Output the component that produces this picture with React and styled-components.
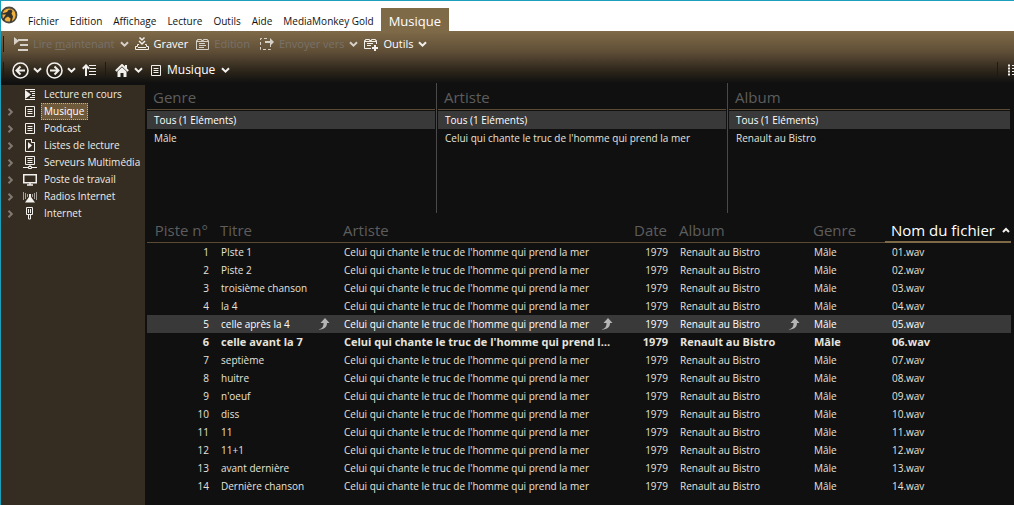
import React from 'react';
import styled, { createGlobalStyle, css } from 'styled-components';

const GlobalStyle = createGlobalStyle`
  * { box-sizing: border-box; }
  html, body { margin: 0; }
  body {
    background: #101010;
    color: #e6e3dc;
    font-family: "Open Sans", "Noto Sans", sans-serif;
    font-size: 10px;
    line-height: 18px;
  }
  button { font: inherit; color: inherit; background: none; border: 0; margin: 0; padding: 0; }
`;

const Window = styled.div`
  display: flex;
  flex-direction: column;
  min-height: 100vh;
  border-top: 1px solid #1b9fbd;
  border-left: 1px solid #1b9fbd;
  overflow: hidden;
`;

const MenuBar = styled.header`
  display: flex;
  align-items: stretch;
  height: 30px;
  background: #fff;
  color: #111;
`;

const Menus = styled.nav`
  display: flex;
  gap: 11px;
  padding: 9px 7px 0 10px;
`;

const MenuButton = styled.button`
  white-space: nowrap;
`;

const Tab = styled.button`
  align-self: flex-end;
  height: 23px;
  padding: 3px 8px 0;
  background: #7f6a48;
  color: #fff;
  font-size: 13px;
  line-height: 20px;
`;

const Toolbars = styled.div`
  background: linear-gradient(#7f6a48, #5f4e37 40%, #2b241a 78%, #101010);
`;

const Toolbar = styled.div`
  display: flex;
  align-items: center;
  height: 26px;
  padding-left: 2px;
`;

const Separator = styled.span`
  flex: none;
  width: 1px;
  height: 16px;
  margin-left: ${(p) => p.$space || 0}px;
  background: #1d1913;
`;

const ToolButton = styled.button`
  display: flex;
  align-items: center;
  gap: ${(p) => p.$gap || 5}px;
  margin-left: ${(p) => p.$space || 6}px;
  color: #fff;
  font-size: ${(p) => (p.$large ? 12 : 11)}px;
  white-space: nowrap;

  ${(p) => p.disabled && css`
    color: #77716a;
    svg { opacity: 0.8; }
  `}
`;

const Spacer = styled.span`
  flex: 1;
`;

const Glyph = styled.svg`
  display: block;
  flex: none;
  fill: none;
  stroke: #f2f0ec;
  stroke-width: ${(p) => p.$weight || 1};
`;

const Body = styled.div`
  display: flex;
  flex: 1;
  padding-right: 3px;
`;

const Sidebar = styled.aside`
  flex: none;
  width: 144px;
  margin: 2px 2px 0 0;
  padding-top: 1px;
  background: #352c22;
`;

const Tree = styled.ul`
  list-style: none;
  margin: 0;
  padding: 0;
`;

const TreeItem = styled.li`
  display: grid;
  grid-template-columns: 12px 14px 1fr;
  column-gap: 4px;
  align-items: center;
  height: 17px;
  padding-left: 6px;
`;

const TreeLink = styled.a`
  grid-column: 3;
  justify-self: start;
  padding: 0 3px 0 2px;
  border: 1px solid transparent;
  line-height: 15px;
  color: #efece4;
  text-decoration: none;
  white-space: nowrap;

  ${(p) => p.$current && css`
    background: #6f593b;
    border: 1px dotted #b7b3aa;
    color: #fff;
  `}
`;

const IconCell = styled.span`
  grid-column: 2;
  display: flex;
  justify-content: center;
`;

const Main = styled.main`
  flex: 1;
  min-width: 0;
`;

const Filters = styled.div`
  display: grid;
  grid-template-columns: 289fr 291fr 284fr;
  height: 130px;
`;

const FilterColumn = styled.section`
  min-width: 0;
  padding-right: 1px;
  & + & {
    border-left: 1px solid #4a4a4a;
    padding-left: 1px;
  }
`;

const FilterTitle = styled.h2`
  margin: 0 0 1px;
  height: 27px;
  padding-left: 6px;
  border-bottom: 1px solid #5b4a34;
  color: #5d5d5d;
  font-size: 15px;
  font-weight: 400;
  line-height: 28px;
`;

const FilterOption = styled.button`
  display: block;
  width: 100%;
  height: 18px;
  padding: 0 7px;
  text-align: left;
  line-height: 18px;
  white-space: nowrap;
  background: ${(p) => (p.$selected ? '#393939' : 'transparent')};
  color: ${(p) => (p.$selected ? '#fff' : 'inherit')};
`;

const TrackTable = styled.table`
  width: 100%;
  margin-top: 5px;
  table-layout: fixed;
  border-collapse: separate;
  border-spacing: 0;
`;

const Col = styled.col`
  width: ${(p) => p.$width};
`;

const HeadCell = styled.th`
  height: 25px;
  padding: 0 6px;
  border-bottom: ${(p) => (p.$sorted ? '2px solid #7f6a48' : '1px solid #5b4a34')};
  color: ${(p) => (p.$sorted ? '#fff' : '#5d5d5d')};
  font-size: 15px;
  font-weight: 400;
  line-height: 22px;
  text-align: ${(p) => (p.$right ? 'right' : 'left')};
  white-space: nowrap;
`;

const SortButton = styled.button`
  display: inline-flex;
  align-items: center;
  gap: 7px;
`;

const Row = styled.tr`
  ${(p) => p.$selected && css`
    background: #393939;
    color: #fff;
  `}
  ${(p) => p.$playing && css`
    font-size: 11px;
    font-weight: 700;
  `}
`;

const Cell = styled.td`
  height: 18px;
  padding: 0 7px;
  padding-right: ${(p) => (p.$right ? 5 : 7)}px;
  overflow: hidden;
  line-height: 18px;
  text-align: ${(p) => (p.$right ? 'right' : 'left')};
  text-overflow: ellipsis;
  white-space: nowrap;
`;

const Linked = styled.span`
  display: flex;
  align-items: center;
  justify-content: space-between;
`;

const Chevron = () => (
  <Glyph width="9" height="7" viewBox="0 0 9 7" $weight={2}><path d="M1 1.2 4.5 4.7 8 1.2" /></Glyph>
);
const Expander = () => (
  <Glyph width="7" height="8" viewBox="0 0 7 8" $weight={2} opacity="0.4"><path d="M1.500 .8 4.800 4 1.500 7.200" /></Glyph>
);
const PlayNowIcon = () => (
  <Glyph width="14" height="14" viewBox="0 0 14 14">
    <path d="M0 0 5 4 0 8Z" fill="#f2f0ec" stroke="none" />
    <path d="M4 3h10M6 8h8M4 13h10" strokeWidth="2" />
  </Glyph>
);
const BurnIcon = () => (
  <Glyph width="14" height="14" viewBox="0 0 14 14">
    <path d="M4.500 .5 7 3l2.500-2.500M4 4l3 3 3-3" strokeWidth="1.500" />
    <path d="M4 7.500H2.500v2H.5v3h13v-3h-2v-2H10M3 10.500h8" />
  </Glyph>
);
const EditIcon = () => (
  <Glyph width="13" height="13" viewBox="0 0 13 13">
    <path d="M.5 11.500v-9h1v-1h4v1h2v-1h4v1h1v9ZM1 3.500h11M3 5.500h6M3 7.500h7M3 9.500h5" />
  </Glyph>
);
const SendIcon = () => (
  <Glyph width="14" height="12" viewBox="0 0 14 12">
    <path d="M7 .5H.5v11h10V7" strokeDasharray="3 2" />
    <path d="M5 3h5V0l4 4-4 4V5H5Z" fill="#f2f0ec" stroke="none" />
  </Glyph>
);
const ToolsIcon = () => (
  <Glyph width="14" height="13" viewBox="0 0 14 13">
    <path d="M7 10.500H.5v-8h1v-1h4v1h2v-1h4v1h1V6M1 3.500h11M3 5.500h6M3 7.500h4" />
    <path d="M11 7v6M8 10h6" strokeWidth="2" />
  </Glyph>
);
const ArrowCircle = ({ forward }) => (
  <Glyph width="17" height="17" viewBox="0 0 17 17">
    <circle cx="8.500" cy="8.500" r="7.500" strokeWidth="1.600" />
    <path d={forward ? 'M4 8.500h8M8.500 4.500l4 4-4 4' : 'M13 8.500H5M8.500 4.500l-4 4 4 4'} strokeWidth="2" />
  </Glyph>
);
const UpIcon = () => (
  <Glyph width="15" height="12" viewBox="0 0 15 12">
    <path d="M4 12V2M.8 4.800 4 1.400 7.200 4.800" strokeWidth="2" />
    <path d="M7 1.500h7M8 4.500h6M7 7.500h7M7 10.500h7" />
  </Glyph>
);
const HomeIcon = () => (
  <Glyph width="14" height="13" viewBox="0 0 14 13">
    <path d="M.8 7 7 1l6.200 6" strokeWidth="2" />
    <path d="M10 1h2v4h-2ZM2.500 7.500 7 3.200l4.500 4.300V13H8.500V9h-3v4h-3Z" fill="#f2f0ec" stroke="none" />
  </Glyph>
);
const LibraryIcon = () => (
  <Glyph width="10" height="11" viewBox="0 0 10 11">
    <path d="M.5.5h9v10h-9ZM2.500 3.500h5M2.500 5.500h5M2.500 7.500h5" />
  </Glyph>
);
const ListIcon = () => (
  <Glyph width="6" height="12" viewBox="0 0 6 12" $weight={2}>
    <path d="M0 1.500h2M0 4.500h2M0 7.500h2M0 10.500h2" />
    <path d="M4 1.500h2M4 4.500h2M4 7.500h2M4 10.500h2" strokeWidth="1" />
  </Glyph>
);
const NowPlayingIcon = () => (
  <Glyph width="10" height="11" viewBox="0 0 10 11">
    <path d="M0 1v9l6-4.500Z" fill="#f2f0ec" stroke="none" />
    <path d="M0 .5h10M5 2.500h5M7 4.500h3M7 6.500h3M5 8.500h5M0 10.500h10" />
  </Glyph>
);
const PlaylistIcon = () => (
  <Glyph width="10" height="13" viewBox="0 0 10 13">
    <path d="M6.500.5h-6v12h9V4M6.500 0v3.500H10" />
    <path d="M3 3v7l4-3.500Z" fill="#f2f0ec" stroke="none" />
  </Glyph>
);
const ServerIcon = () => (
  <Glyph width="14" height="13" viewBox="0 0 14 13">
    <path d="M2.500.5h9v8h-9ZM4.500 2.500h5M4.500 4.500h5M4.500 6.500h5M0 11.500h5M9 11.500h5M7 9v1M5.500 10.500h3v2h-3Z" />
  </Glyph>
);
const ComputerIcon = () => (
  <Glyph width="14" height="12" viewBox="0 0 14 12">
    <path d="M.75.75h12.500v8H.75Z" strokeWidth="1.500" /><path d="M7 9v2M4 11h6" strokeWidth="1.500" />
  </Glyph>
);
const RadioIcon = () => (
  <Glyph width="14" height="12" viewBox="0 0 14 12">
    <path d="M.5 1v8M2.500 2v6M4.500 3v3M9.500 3v3M11.500 2v6M13.500 1v8" opacity="0.6" />
    <path d="M6 3h2v3l4 5.500H2L6 6Z" fill="#f2f0ec" stroke="none" />
  </Glyph>
);
const InternetIcon = () => (
  <Glyph width="8" height="13" viewBox="0 0 8 13">
    <path d="M.5.5h6v7h-6ZM2.500 2v4M4.500 2v4M2.500 8v4h2v-4" />
  </Glyph>
);
const LinkArrow = () => (
  <Glyph width="12" height="12" viewBox="0 0 12 12" aria-hidden="true">
    <path d="M7 0 11.500 5H9c0 4-2.500 6.500-8.500 6.500C4 10.500 5.500 9 5.500 5H2.500Z" fill="#b5b5b5" stroke="none" />
  </Glyph>
);
const SortArrow = () => (
  <Glyph width="8" height="6" viewBox="0 0 8 6" $weight={2}><path d="M1 5 4 2l3 3" /></Glyph>
);

const LogoArt = styled.svg`
  flex: none;
  margin: 5px 0 0 -1px;
`;
const Logo = () => (
  <LogoArt width="18" height="18" viewBox="0 0 18 18" role="img" aria-label="MediaMonkey">
    <circle cx="9" cy="9" r="7.500" fill="#f3b13c" stroke="#4b4944" strokeWidth="1.800" />
    <path d="M2 7.500 7 6l1.500-2 2.500-.5 1.500 1.500-1 2.500 1.500 3-1.500 5.500-1.500.5.500-4L8 10.500 5.500 12 4 15l-1.500-1.500 2-3L6 8.500H2Z" fill="#35332d" />
  </LogoArt>
);

const menus = ['Fichier', 'Edition', 'Affichage', 'Lecture', 'Outils', 'Aide', 'MediaMonkey Gold'];

const nodes = [
  { label: 'Lecture en cours', Icon: NowPlayingIcon, leaf: true },
  { label: 'Musique', Icon: LibraryIcon, current: true },
  { label: 'Podcast', Icon: LibraryIcon },
  { label: 'Listes de lecture', Icon: PlaylistIcon },
  { label: 'Serveurs Multimédia', Icon: ServerIcon },
  { label: 'Poste de travail', Icon: ComputerIcon },
  { label: 'Radios Internet', Icon: RadioIcon },
  { label: 'Internet', Icon: InternetIcon },
];

const ARTIST = "Celui qui chante le truc de l'homme qui prend la mer";
const ALBUM = 'Renault au Bistro';

const filters = [
  ['Genre', 'Mâle'],
  ['Artiste', ARTIST],
  ['Album', ALBUM],
];

const titles = [
  'PIste 1', 'Piste 2', 'troisième chanson', 'la 4', 'celle après la 4', 'celle avant la 7', 'septième',
  'huitre', "n'oeuf", 'diss', '11', '11+1', 'avant dernière', 'Dernière chanson',
];

function TrackRow({ number, title }) {
  const selected = number === 5;
  const withArrow = (text) => (selected ? <Linked>{text}<LinkArrow /></Linked> : text);
  return (
    <Row $selected={selected} $playing={number === 6}>
      <Cell $right>{number}</Cell>
      <Cell>{withArrow(title)}</Cell>
      <Cell>{withArrow(ARTIST)}</Cell>
      <Cell $right>1979</Cell>
      <Cell>{withArrow(ALBUM)}</Cell>
      <Cell>Mâle</Cell>
      <Cell>{String(number).padStart(2, '0')}.wav</Cell>
    </Row>
  );
}

export default function App() {
  return (
    <>
      <GlobalStyle />
      <Window>
        <MenuBar>
          <Logo />
          <Menus>{menus.map((m) => <MenuButton key={m}>{m}</MenuButton>)}</Menus>
          <Tab>Musique</Tab>
        </MenuBar>
        <Toolbars>
          <Toolbar>
            <Separator />
            <ToolButton disabled $space={10}><PlayNowIcon /><span>Lire <u>m</u>aintenant</span><Chevron /></ToolButton>
            <ToolButton><BurnIcon />Graver</ToolButton>
            <ToolButton disabled $space={8}><EditIcon />Edition</ToolButton>
            <ToolButton disabled $space={10}><SendIcon />Envoyer vers<Chevron /></ToolButton>
            <ToolButton><ToolsIcon />Outils<Chevron /></ToolButton>
          </Toolbar>
          <Toolbar>
            <Separator />
            <ToolButton $space={8} $gap={4} aria-label="Précédent"><ArrowCircle /><Chevron /></ToolButton>
            <ToolButton $space={4} $gap={4} aria-label="Suivant"><ArrowCircle forward /><Chevron /></ToolButton>
            <ToolButton aria-label="Niveau supérieur"><UpIcon /></ToolButton>
            <Separator $space={8} />
            <ToolButton $space={9} aria-label="Accueil"><HomeIcon /><Chevron /></ToolButton>
            <ToolButton $space={8} $gap={6} $large><LibraryIcon />Musique<Chevron /></ToolButton>
            <Spacer />
            <Separator />
            <ToolButton $space={10} aria-label="Affichage"><ListIcon /></ToolButton>
          </Toolbar>
        </Toolbars>
        <Body>
          <Sidebar>
            <Tree>
              {nodes.map(({ label, Icon, leaf, current }) => (
                <TreeItem key={label}>
                  {!leaf && <Expander />}
                  <IconCell><Icon /></IconCell>
                  <TreeLink href="#" $current={current}>{label}</TreeLink>
                </TreeItem>
              ))}
            </Tree>
          </Sidebar>
          <Main>
            <Filters>
              {filters.map(([name, value]) => (
                <FilterColumn key={name}>
                  <FilterTitle>{name}</FilterTitle>
                  <FilterOption $selected>Tous (1 Eléments)</FilterOption>
                  <FilterOption>{value}</FilterOption>
                </FilterColumn>
              ))}
            </Filters>
            <TrackTable>
              <colgroup>
                <Col $width="67px" /><Col $width="123px" /><Col $width="auto" /><Col $width="53px" />
                <Col $width="134px" /><Col $width="78px" /><Col $width="126px" />
              </colgroup>
              <thead>
                <tr>
                  <HeadCell $right>Piste n°</HeadCell>
                  <HeadCell>Titre</HeadCell>
                  <HeadCell>Artiste</HeadCell>
                  <HeadCell $right>Date</HeadCell>
                  <HeadCell>Album</HeadCell>
                  <HeadCell>Genre</HeadCell>
                  <HeadCell $sorted aria-sort="ascending"><SortButton>Nom du fichier<SortArrow /></SortButton></HeadCell>
                </tr>
              </thead>
              <tbody>
                {titles.map((title, i) => <TrackRow key={title} number={i + 1} title={title} />)}
              </tbody>
            </TrackTable>
          </Main>
        </Body>
      </Window>
    </>
  );
}
